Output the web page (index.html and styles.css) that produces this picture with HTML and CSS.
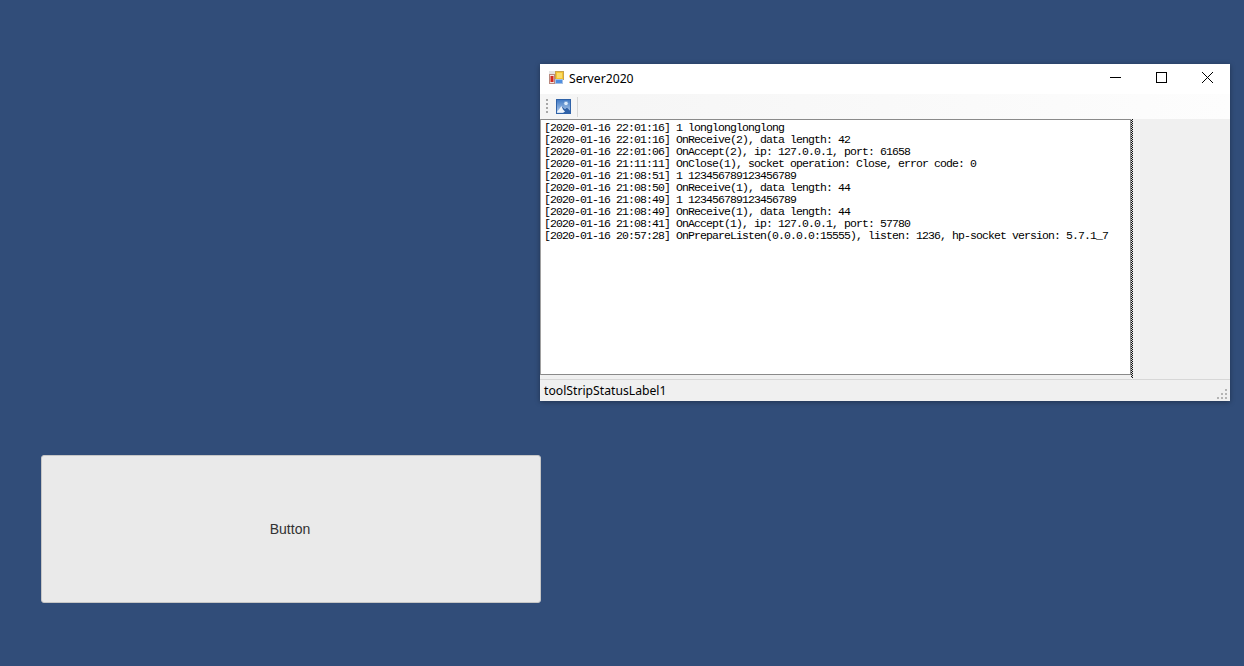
FILE: index.html
```html
<!DOCTYPE html>
<html lang="en">
<head>
<meta charset="utf-8">
<title>Server2020</title>
<link rel="stylesheet" href="styles.css">
</head>
<body>
<button class="unity-button" type="button">Button</button>
<section class="window">
  <header class="titlebar">
    <svg class="app-icon" width="16" height="16" viewBox="0 0 16 16">
      <rect x="0" y="1" width="14" height="12" fill="#e4e4e4"/>
      <rect x="6.5" y="1.5" width="8" height="8" fill="#f4c430" stroke="#c9a24a"/>
      <rect x="8" y="3" width="5" height="5" fill="#f9dc6a"/>
      <rect x="0.5" y="4.5" width="5" height="9" fill="#f2e4e0" stroke="#b8887e"/>
      <rect x="1.5" y="6" width="3" height="6" fill="#d3281f"/>
      <rect x="6.5" y="9.5" width="7" height="4" fill="#4f8fe0" stroke="#a6c0e4"/>
    </svg>
    <span class="title">Server2020</span>
    <div class="caption-buttons">
      <svg class="caption" width="46" height="30" viewBox="0 0 46 30"><path d="M18 14.500h11" stroke="#000" fill="none"/></svg>
      <svg class="caption" width="46" height="30" viewBox="0 0 46 30"><rect x="18.500" y="9.500" width="10" height="10" stroke="#000" fill="none"/></svg>
      <svg class="caption" width="46" height="30" viewBox="0 0 46 30"><path d="M18 9l11 11M29 9l-11 11" stroke="#000" fill="none"/></svg>
    </div>
  </header>
  <div class="toolbar">
    <span class="grip"></span>
    <svg class="tool-icon" width="15" height="15" viewBox="0 0 15 15">
      <defs>
        <linearGradient id="sky" x1="0" y1="0" x2="0" y2="1">
          <stop offset="0" stop-color="#3f78c4"/>
          <stop offset="1" stop-color="#b9d2f0"/>
        </linearGradient>
      </defs>
      <rect x="0.500" y="0.500" width="14" height="14" fill="url(#sky)" stroke="#2f62a8"/>
      <circle cx="10" cy="4.500" r="2.200" fill="#dcebfb" stroke="#5d8cc8" stroke-width="0.600"/>
      <path d="M1 13l4.500-6 3.500 3 2-1.500 3 3v2H1z" fill="#f0f5fb"/>
      <path d="M5.500 7L9 10l2-1.500 3 3V14H7l2-1.500-2-2z" fill="#2f62a8"/>
    </svg>
    <span class="tool-sep"></span>
  </div>
  <div class="client">
    <pre class="log">[2020-01-16 22:01:16] 1 longlonglonglong
[2020-01-16 22:01:16] OnReceive(2), data length: 42
[2020-01-16 22:01:06] OnAccept(2), ip: 127.0.0.1, port: 61658
[2020-01-16 21:11:11] OnClose(1), socket operation: Close, error code: 0
[2020-01-16 21:08:51] 1 123456789123456789
[2020-01-16 21:08:50] OnReceive(1), data length: 44
[2020-01-16 21:08:49] 1 123456789123456789
[2020-01-16 21:08:49] OnReceive(1), data length: 44
[2020-01-16 21:08:41] OnAccept(1), ip: 127.0.0.1, port: 57780
[2020-01-16 20:57:28] OnPrepareListen(0.0.0.0:15555), listen: 1236, hp-socket version: 5.7.1_7</pre>
    <div class="splitter"></div>
    <div class="side"></div>
  </div>
  <footer class="status">
    <span class="status-label">toolStripStatusLabel1</span>
    <svg class="resize-grip" width="11" height="11" viewBox="0 0 11 11" fill="#b4b4b4">
      <rect x="8" y="0" width="2" height="2"/>
      <rect x="4" y="4" width="2" height="2"/><rect x="8" y="4" width="2" height="2"/>
      <rect x="0" y="8" width="2" height="2"/><rect x="4" y="8" width="2" height="2"/><rect x="8" y="8" width="2" height="2"/>
    </svg>
  </footer>
</section>
</body>
</html>
```
FILE: styles.css
```css
html, body {
  margin: 0;
  height: 100%;
  overflow: hidden;
  background: #314d79;
}
.unity-button {
  position: absolute;
  left: 41px;
  top: 455px;
  width: 500px;
  height: 148px;
  box-sizing: border-box;
  margin: 0;
  padding: 0 2px 1px 0;
  border: 1px solid #c6c6c6;
  border-radius: 3px;
  background: #eaeaea;
  color: #323232;
  font: 14px "Liberation Sans", Arial, sans-serif;
}
.window {
  position: absolute;
  left: 540px;
  top: 64px;
  width: 690px;
  height: 337px;
  display: flex;
  flex-direction: column;
  background: #f0f0f0;
  box-shadow: 0 1px 5px rgba(0, 0, 0, 0.35);
}
.titlebar {
  height: 30px;
  flex: none;
  display: flex;
  align-items: center;
  background: #fff;
  padding: 0 0 2px 9px;
  box-sizing: border-box;
}
.app-icon { flex: none; }
.title {
  margin-left: 4px;
  font: 12.2px "Noto Sans", sans-serif;
  color: #000;
}
.caption-buttons { margin-left: auto; display: flex; }
.caption { display: block; }
.toolbar {
  height: 25px;
  flex: none;
  display: flex;
  align-items: center;
  box-sizing: border-box;
  padding-left: 6px;
  background: linear-gradient(90deg, #f5f5f5, #fdfdfd);
}
.grip {
  width: 2px;
  height: 16px;
  background: repeating-linear-gradient(180deg, #a8a8a8 0 2px, transparent 2px 4px);
}
.tool-icon { margin-left: 8px; flex: none; }
.tool-sep {
  width: 1px;
  height: 20px;
  margin-left: 6px;
  background: #d8d8d8;
}
.client {
  flex: 1;
  min-height: 0;
  display: flex;
}
.log {
  box-sizing: border-box;
  width: 591px;
  height: 256px;
  margin: 0;
  padding: 2px 0 0 3px;
  border: 1px solid #8a8a8a;
  border-left-color: #a0a0a0;
  background: #fff;
  color: #000;
  font: 11.5px/12px "Liberation Mono", "Noto Sans CJK SC", monospace;
  letter-spacing: -0.9px;
  overflow: hidden;
}
.splitter {
  width: 2px;
  height: 259px;
  flex: none;
  background: repeating-conic-gradient(#111 0 25%, #ddd 0 50%) 0 0 / 2px 2px;
}
.side { flex: 1; }
.status {
  height: 22px;
  flex: none;
  box-sizing: border-box;
  display: flex;
  align-items: center;
  justify-content: space-between;
  padding-left: 4px;
  border-top: 1px solid #d7d7d7;
  background: #f0f0f0;
}
.status-label { font: 12.2px "Noto Sans", sans-serif; color: #000; }
.resize-grip { align-self: flex-end; margin-right: 2px; margin-bottom: 1px; }
```
